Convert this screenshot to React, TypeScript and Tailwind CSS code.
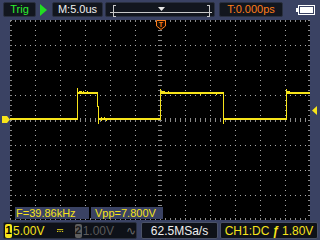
import React from "react";

const Y = "#f7e41a";

function Grid() {
  const els: React.ReactNode[] = [];
  for (let i = 1; i < 12; i++) {
    const x = 10 + i * 25;
    if (x === 160) continue;
    for (let y = 20; y <= 220; y += 5) {
      els.push(<rect key={`v${i}-${y}`} x={x} y={y} width={1} height={1} fill="#a8a8a8" />);
    }
  }
  for (let j = 1; j < 8; j++) {
    const y = 20 + j * 25;
    if (y === 120) continue;
    for (let x = 10; x <= 310; x += 5) {
      els.push(<rect key={`h${j}-${x}`} x={x} y={y} width={1} height={1} fill="#a8a8a8" />);
    }
  }
  for (let x = 10; x <= 310; x += 5) {
    els.push(<rect key={`cx${x}`} x={x} y={118} width={1} height={4} fill="#8a8a8a" />);
  }
  for (let y = 20; y <= 220; y += 5) {
    els.push(<rect key={`cy${y}`} x={158} y={y} width={4} height={1} fill="#8a8a8a" />);
  }
  for (let x = 10; x <= 310; x += 5) {
    els.push(<rect key={`bt${x}`} x={x} y={20} width={1} height={2} fill="#8a8a8a" />);
    els.push(<rect key={`bb${x}`} x={x} y={218} width={1} height={2} fill="#8a8a8a" />);
  }
  for (let y = 20; y <= 220; y += 5) {
    els.push(<rect key={`bl${y}`} x={10} y={y} width={2} height={1} fill="#8a8a8a" />);
    els.push(<rect key={`br${y}`} x={308} y={y} width={2} height={1} fill="#8a8a8a" />);
  }
  return <>{els}</>;
}

const wave: [number, number, number, number][] = [
  [10, 118, 67, 2],
  [77, 88, 1, 32],
  [78, 92, 19, 2],
  [79, 91, 3, 1],
  [83, 91, 1, 1],
  [87, 91, 1, 1],
  [97, 92, 1, 15],
  [98, 106, 1, 18],
  [99, 118, 61, 2],
  [101, 117, 1, 4],
  [104, 117, 1, 1],
  [106, 120, 1, 1],
  [160, 89, 1, 31],
  [161, 92, 62, 2],
  [161, 91, 4, 1],
  [168, 91, 1, 1],
  [200, 94, 1, 1],
  [216, 94, 1, 1],
  [223, 92, 1, 32],
  [224, 118, 62, 2],
  [286, 89, 1, 31],
  [287, 92, 23, 2],
  [287, 91, 3, 1],
];

export default function App() {
  return (
    <div className="w-[320px] h-[240px] bg-[#3a4263] flex flex-col overflow-hidden font-['Liberation_Sans',Arial,sans-serif] leading-none select-none">
      {/* top bar */}
      <div className="h-[20px] flex items-start pt-[2px] pl-[3px] shrink-0">
        <div className="w-[33px] h-[15px] bg-[#12161e] border border-[#2a3040] rounded-[2px] flex items-center justify-center text-[11px] text-[#2ef02e]">
          Trig
        </div>
        <svg className="ml-[4px] mt-[2px]" width="7" height="12" viewBox="0 0 7 12">
          <polygon points="0,0 7,6 0,12" fill="#22dd22" />
        </svg>
        <div className="ml-[5px] w-[51px] h-[15px] bg-[#12161e] border border-[#2a3040] rounded-[2px] flex items-center justify-center text-[11px] text-[#f0f0f0]">
          M:5.0us
        </div>
        <div className="ml-[2px] w-[110px] h-[15px] bg-[#12161e] border border-[#2a3040] rounded-[2px] relative">
          <svg className="absolute left-0 top-0" width="110" height="15" viewBox="105 2 110 15">
            <rect x="109" y="11" width="102" height="1" fill="#c8c8c8" />
            <rect x="112" y="4" width="1" height="12" fill="#c8c8c8" />
            <rect x="112" y="4" width="3" height="1" fill="#c8c8c8" />
            <rect x="112" y="15" width="3" height="1" fill="#c8c8c8" />
            <rect x="208" y="4" width="1" height="12" fill="#c8c8c8" />
            <rect x="206" y="4" width="3" height="1" fill="#c8c8c8" />
            <rect x="206" y="15" width="3" height="1" fill="#c8c8c8" />
            <polygon points="157,6 164,6 160.5,10" fill="#e8e8e8" />
          </svg>
        </div>
        <div className="ml-[4px] w-[64px] h-[15px] bg-[#12161e] border border-[#2a3040] rounded-[2px] flex items-center justify-center text-[11px] text-[#ff7d1a]">
          T:0.000ps
        </div>
        <svg className="ml-[13px] mt-[3px]" width="19" height="10" viewBox="0 0 19 10">
          <rect x="0" y="3" width="2" height="4" fill="#ffffff" />
          <rect x="2.5" y="0.5" width="16" height="9" fill="none" stroke="#ffffff" />
          <rect x="4" y="2" width="13" height="6" fill="#ffffff" />
        </svg>
      </div>

      {/* middle */}
      <div className="h-[200px] flex shrink-0">
        <div className="w-[10px] relative">
          <svg className="absolute left-0 top-0" width="10" height="200" viewBox="0 20 10 200">
            <polygon points="2,116 7,116 10,119.5 7,123 2,123" fill={Y} />
          </svg>
        </div>
        <div className="w-[300px] h-[200px] bg-black relative">
          <svg className="absolute left-0 top-0" width="300" height="200" viewBox="10 20 300 200" shapeRendering="crispEdges">
            <Grid />
            {wave.map(([x, y, w, h], i) => (
              <rect key={i} x={x} y={y} width={w} height={h} fill={Y} />
            ))}
          </svg>
          <svg className="absolute left-[146px] top-0" width="10" height="10" viewBox="0 0 10 10">
            <path d="M0.5 0.5 H9.5 V6 L5 9.5 L0.5 6 Z" fill="#1a0c00" stroke="#ff7d1a" />
            <text x="5" y="7" textAnchor="middle" fontSize="7" fontWeight="bold" fill="#ff7d1a" fontFamily="Liberation Sans, Arial, sans-serif">T</text>
          </svg>
          <div className="absolute left-[5px] top-[187px] flex gap-[2px]">
            <div className="w-[74px] h-[12px] bg-[#3a4263] text-[11px] text-[#f7e41a] flex items-center pl-[1px]">
              F=39.86kHz
            </div>
            <div className="w-[72px] h-[12px] bg-[#3a4263] text-[11px] text-[#f7e41a] flex items-center pl-[4px]">
              Vpp=7.800V
            </div>
          </div>
        </div>
        <div className="w-[10px] relative">
          <svg className="absolute left-0 top-0" width="10" height="200" viewBox="310 20 10 200">
            <polygon points="312,110.5 317,106 317,115" fill={Y} />
          </svg>
        </div>
      </div>

      {/* bottom bar */}
      <div className="h-[20px] flex items-start pt-[2px] pl-[3px] shrink-0">
        <div className="w-[134px] h-[17px] bg-[#0e1118] border border-[#2a3040] rounded-[2px] flex items-center relative">
          <div className="ml-[1px] w-[8px] h-[14px] bg-[#f7e41a] rounded-[2px] text-[11px] text-black flex items-center justify-center font-bold">
            1
          </div>
          <span className="ml-[1px] text-[12px] text-[#f7e41a]">5.00V</span>
          <svg className="ml-[13px]" width="7" height="4" viewBox="0 0 7 4">
            <rect x="0" y="0" width="7" height="1" fill="#f7e41a" />
            <rect x="0" y="2" width="1.5" height="1" fill="#f7e41a" />
            <rect x="2.75" y="2" width="1.5" height="1" fill="#f7e41a" />
            <rect x="5.5" y="2" width="1.5" height="1" fill="#f7e41a" />
          </svg>
          <div className="ml-[11px] w-[8px] h-[14px] bg-[#5e5e5e] rounded-[2px] text-[11px] text-[#1a1a1a] flex items-center justify-center font-bold">
            2
          </div>
          <span className="ml-[1px] text-[12px] text-[#5a5a5a]">1.00V</span>
          <span className="ml-[12px] text-[12px] text-[#6a6a6a]">∿</span>
        </div>
        <div className="ml-[4px] w-[77px] h-[17px] bg-[#0e1118] border border-[#4a5166] rounded-[2px] flex items-center justify-center text-[12px] text-[#f0f0f0]">
          62.5MSa/s
        </div>
        <div className="ml-[2px] w-[98px] h-[17px] bg-[#0e1118] border border-[#4a5166] rounded-[2px] flex items-center justify-center text-[12px] text-[#f7e41a] gap-[3px]">
          <span>CH1:DC</span>
          <span className="italic font-bold">ƒ</span>
          <span>1.80V</span>
        </div>
      </div>
    </div>
  );
}
